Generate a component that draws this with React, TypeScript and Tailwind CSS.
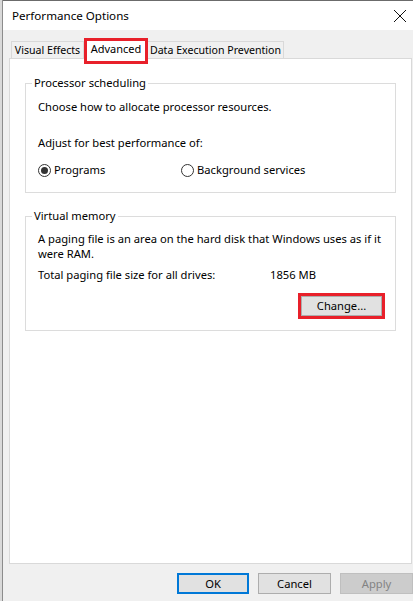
import React from "react";

function Radio({ checked }: { checked?: boolean }) {
  return (
    <span className="w-[13px] h-[13px] rounded-full border border-[#333333] bg-white flex items-center justify-center">
      {checked && <span className="w-[7px] h-[7px] rounded-full bg-[#333333]" />}
    </span>
  );
}

export default function App() {
  return (
    <div
      className="w-[413px] h-[601px] flex bg-[#f0f0f0] text-black text-[11.2px] overflow-hidden"
      style={{ fontFamily: '"Noto Sans", "Open Sans", sans-serif' }}
    >
      <div className="w-[3px] h-full bg-[#d9d9d9] border-r border-[#8c8c8c]" />
      <div className="flex-1 flex flex-col">
        {/* title bar */}
        <div className="h-[30px] bg-white flex items-center pl-[9px] pr-[5px] border-t border-[#6b6b6b]">
          <span className="text-[11.6px] leading-none">Performance Options</span>
          <div className="ml-auto w-[14px] h-[14px] mr-[1px]">
            <svg width="14" height="14" viewBox="0 0 14 14">
              <path d="M1 1 L13 13 M13 1 L1 13" stroke="#111" strokeWidth="1" />
            </svg>
          </div>
        </div>
        {/* tabs */}
        <div className="pt-[10px] pl-[6px] flex flex-col flex-1">
          <div className="flex items-end h-[18px] pl-[2px] relative z-10 whitespace-nowrap text-[10.6px]">
            <div className="shrink-0 w-[73px] h-[17px] border border-b-0 border-[#d9d9d9] bg-[#f0f0f0] flex items-center justify-center leading-none">
              Visual Effects
            </div>
            <div className="shrink-0 relative w-[64px] h-[20px] -mb-[1px] border border-b-0 border-[#d9d9d9] bg-white flex items-center justify-center leading-none pb-[2px] text-[11px]">
              Advanced
              <span className="absolute left-[-1px] right-[-1px] top-[-2px] h-[26px] border-[3px] border-[#e8202a]" />
            </div>
            <div className="shrink-0 w-[136px] h-[17px] border border-b-0 border-l-0 border-[#d9d9d9] bg-[#f0f0f0] flex items-center justify-center leading-none">
              Data Execution Prevention
            </div>
          </div>
          <div className="h-[506px] bg-white border border-[#d9d9d9] mr-[1px] pt-[17px] px-[15px]">
            <fieldset className="border border-[#dcdcdc] h-[117px] p-0">
              <legend className="ml-[6px] px-[2px] leading-[14px]">Processor scheduling</legend>
              <div className="pl-[12px] pr-[8px]">
                <div className="mt-[9px] leading-[16px]">Choose how to allocate processor resources.</div>
                <div className="mt-[20px] leading-[16px]">Adjust for best performance of:</div>
                <div className="mt-[11px] flex items-center leading-[16px]">
                  <div className="flex items-center gap-[3px] w-[143px]">
                    <Radio checked />
                    <span>Programs</span>
                  </div>
                  <div className="flex items-center gap-[3px]">
                    <Radio />
                    <span>Background services</span>
                  </div>
                </div>
              </div>
            </fieldset>
            <fieldset className="mt-[16px] border border-[#dcdcdc] h-[122px] p-0">
              <legend className="ml-[6px] px-[2px] leading-[14px]">Virtual memory</legend>
              <div className="pl-[12px] pr-[8px]">
                <div className="mt-[8px] leading-[15px]">
                  A paging file is an area on the hard disk that Windows uses as if it were RAM.
                </div>
                <div className="mt-[6px] flex leading-[16px]">
                  <span className="w-[232px]">Total paging file size for all drives:</span>
                  <span>1856 MB</span>
                </div>
                <div className="mt-[10px] flex justify-end pr-[2px]">
                  <div className="border-[3px] border-[#e8202a]">
                    <button className="w-[81px] h-[20px] bg-[#e1e1e1] border border-[#adadad] flex items-center justify-center leading-none">
                      Change...
                    </button>
                  </div>
                </div>
              </div>
            </fieldset>
          </div>
          <div className="flex justify-end gap-[9px] mt-[9px]">
            <button className="w-[72px] h-[21px] bg-[#e1e1e1] border-2 border-[#0078d7] flex items-center justify-center leading-none">
              OK
            </button>
            <button className="w-[73px] h-[21px] bg-[#e1e1e1] border border-[#adadad] flex items-center justify-center leading-none">
              Cancel
            </button>
            <button className="w-[73px] h-[21px] bg-[#cccccc] border border-[#bfbfbf] text-[#838383] flex items-center justify-center leading-none">
              Apply
            </button>
          </div>
        </div>
      </div>
    </div>
  );
}
